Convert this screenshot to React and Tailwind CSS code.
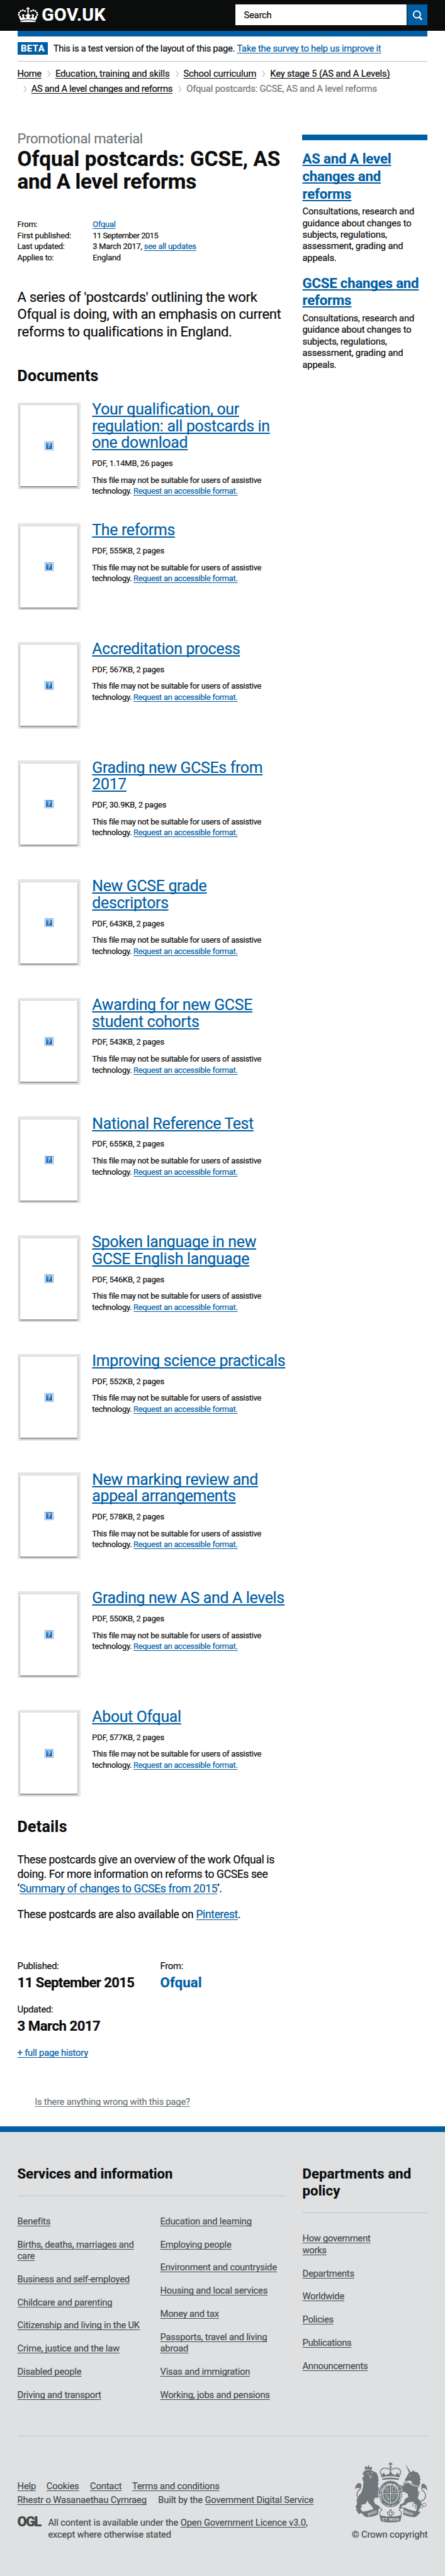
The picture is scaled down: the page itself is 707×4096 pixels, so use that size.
import React from "react";

const LINK = "text-[#005ea5] underline";

const DOCS = [
  { lines: ["Your qualification, our", "regulation: all postcards in", "one download"], meta: "PDF, 1.14MB, 26 pages" },
  { lines: ["The reforms"], meta: "PDF, 555KB, 2 pages" },
  { lines: ["Accreditation process"], meta: "PDF, 567KB, 2 pages" },
  { lines: ["Grading new GCSEs from", "2017"], meta: "PDF, 30.9KB, 2 pages" },
  { lines: ["New GCSE grade", "descriptors"], meta: "PDF, 643KB, 2 pages" },
  { lines: ["Awarding for new GCSE", "student cohorts"], meta: "PDF, 543KB, 2 pages" },
  { lines: ["National Reference Test"], meta: "PDF, 655KB, 2 pages" },
  { lines: ["Spoken language in new", "GCSE English language"], meta: "PDF, 546KB, 2 pages" },
  { lines: ["Improving science practicals"], meta: "PDF, 552KB, 2 pages" },
  { lines: ["New marking review and", "appeal arrangements"], meta: "PDF, 578KB, 2 pages" },
  { lines: ["Grading new AS and A levels"], meta: "PDF, 550KB, 2 pages" },
  { lines: ["About Ofqual"], meta: "PDF, 577KB, 2 pages" },
];

const SERVICES_A = [
  ["Benefits"],
  ["Births, deaths, marriages and", "care"],
  ["Business and self-employed"],
  ["Childcare and parenting"],
  ["Citizenship and living in the UK"],
  ["Crime, justice and the law"],
  ["Disabled people"],
  ["Driving and transport"],
];
const SERVICES_B = [
  ["Education and learning"],
  ["Employing people"],
  ["Environment and countryside"],
  ["Housing and local services"],
  ["Money and tax"],
  ["Passports, travel and living", "abroad"],
  ["Visas and immigration"],
  ["Working, jobs and pensions"],
];
const DEPARTMENTS = [
  ["How government", "works"],
  ["Departments"],
  ["Worldwide"],
  ["Policies"],
  ["Publications"],
  ["Announcements"],
];

function Lines({ lines }) {
  return lines.map((line, i) => (
    <React.Fragment key={line}>
      {i > 0 && <br />}
      {line}
    </React.Fragment>
  ));
}

function CrownLogo() {
  return (
    <svg className="h-[26px] w-[36px] shrink-0" viewBox="30 36 108 78" fill="#fff">
      <path d="M81 37h6v5h5v6h-5v6h-6v-6h-5v-6h5z" />
      <circle cx="84" cy="57" r="5" />
      <circle cx="84" cy="67" r="4" />
      {[[36, 77], [38, 66], [46, 57], [57, 53], [68, 57], [132, 77], [130, 66], [122, 57], [111, 53], [100, 57]].map(([x, y]) => (
        <circle key={x} cx={x} cy={y} r="5" />
      ))}
      <path d="M35 84l9-2 8 15 4-13-5-6 8-5 8 5-5 6 6 11 9-3-1-8-5 2V76l6 2 2-5 5-3 5 3 2 5 6-2v10l-5-2-1 8 9 3 6-11-5-6 8-5 8 5-5 6 4 13 8-15 9 2-9 22q-40-9-80 0z" />
      <path d="M45 109q39-9 78 0l-1 5H46z" />
    </svg>
  );
}

function Chevron() {
  return (
    <svg className="ml-[10px] mr-[8px] mt-[2px] h-[12px] w-[6px]" viewBox="0 0 6 12" fill="none" stroke="#bfc1c3" strokeWidth="1.4">
      <path d="M.8.6 5 6 .8 11.4" />
    </svg>
  );
}

function Header() {
  return (
    <header className="flex h-[53px] items-start bg-[#0b0c0c] px-[30px] text-white">
      <div className="mt-[12px] flex w-[376px] gap-[6px]">
        <CrownLogo />
        <span className="text-[31px] leading-[28px] font-bold tracking-[0.012em]">GOV.UK</span>
      </div>
      <div className="mt-[8px] flex h-[36px] w-[332px] gap-px">
        <div className="flex w-[296px] items-center bg-white pl-[15px] text-[16px] leading-[20px] text-[#0b0c0c]">Search</div>
        <div className="flex w-[35px] items-center justify-center bg-[#005ea5]">
          <svg className="h-[18px] w-[18px]" viewBox="0 0 18 18" fill="none" stroke="#fff" strokeWidth="2">
            <circle cx="8" cy="7.6" r="6" />
            <path d="m12 12.2 4.6 4.4" strokeWidth="2.6" />
          </svg>
        </div>
      </div>
    </header>
  );
}

function Thumbnail() {
  return (
    <div className="mt-[2px] h-[150px] w-[109px] shrink-0 bg-[#e6e6e6] p-[5px]">
      <div className="flex h-[140px] items-center justify-center bg-white shadow-[0_2px_2px_rgba(11,12,12,0.4),0_0_1px_rgba(11,12,12,0.5)]">
        <div className="flex h-[15px] w-[15px] items-center justify-center border border-[#7fa3cf] bg-white p-px">
          <span className="h-full w-full bg-linear-to-b from-[#3a94d0] to-[#1c67b4] text-center font-['Liberation_Serif',serif] text-[11px] leading-[11px] font-bold tracking-normal text-white [-webkit-text-stroke:0]">?</span>
        </div>
      </div>
    </div>
  );
}

function Document({ doc }) {
  return (
    <li className="mb-[53px] flex gap-[20px] first:mb-[44px] last:mb-0">
      <Thumbnail />
      <div className="w-[340px] text-[14px] leading-[19px]">
        <h3 className={`${LINK} text-[27px] leading-[29px] tracking-[-0.0125em] whitespace-nowrap`}><Lines lines={doc.lines} /></h3>
        <p className="mt-[11px] tracking-[-0.009em]">{doc.meta}</p>
        <p className="mt-[10px] tracking-[-0.0215em]">
          This file may not be suitable for users of assistive<br />
          technology. <a className={LINK}>Request an accessible format.</a>
        </p>
      </div>
    </li>
  );
}

function Related({ title }) {
  return (
    <div>
      <h2 className={`${LINK} text-[24px] leading-[30px] font-bold tracking-[-0.006em]`}><Lines lines={title} /></h2>
      <p className="mt-[5.5px] tracking-[-0.0114em]">
        Consultations, research and<br />guidance about changes to<br />subjects, regulations,<br />assessment, grading and<br />appeals.
      </p>
    </div>
  );
}

function FooterList({ items }) {
  return (
    <ul className="flex w-[226.5px] shrink-0 flex-col gap-[20px] whitespace-nowrap">
      {items.map((lines) => (
        <li key={lines[0]}><a className="underline"><Lines lines={lines} /></a></li>
      ))}
    </ul>
  );
}

function Crest() {
  const label = "font-['Roboto',sans-serif] font-bold tracking-normal";
  return (
    <svg className="h-[104px] w-[125px]" viewBox="15 13 375 312" fill="#6f777b">
      {/* crown */}
      <path d="M196 14h6v5h6v7h-6v8h-6v-8h-6v-7h6z" />
      <circle cx="199" cy="40" r="6" />
      <path d="M196 44h6v40h-6z" />
      <path d="M150 78C136 48 168 34 194 52M248 78C262 48 230 34 204 52" fill="none" stroke="#6f777b" strokeWidth="6" strokeDasharray="5 1.5" />
      <path d="M152 92q47-13 94 0l3-26-6 12-10-12-5 12-8 1-12-6-9-13-9 13-12 6-8-1-5-12-10 12-6-12z" />
      <path d="M155 98q44-11 88 0l-3 8q-41-9-82 0z" />
      {/* lion */}
      <path d="M67 51q-6-16 6-17l5 7 6-10 7 10 7-5q9 5 2 18-17-6-33-3zM82 29h5v7h-5z" />
      <path d="M65 57q18-7 37-1l12 6 15 7-3 5 8 5-2 6 6 7-4 6 5 10-6 5 4 12-4 10 6 16 10 11-4 9 9 5-4 16-8-4-10 10-13-2-7 17 7 16 23 12-1 12-8 10-4-7-7 6-3-8-8 4-8-15-19-20-2-13-13 20-21 4 2 13-8 9 10 8-1 10-14 8-7-5-3-10-6-3 2-12-6-7 9-17-3-20 13-24 12-13 8-26 3-29-6-17 2-10 8-1-3-9-7-5z" />
      <path d="M78 69l10 2M99 69l9-1M88 84q8 4 15 0M90 94h11" stroke="#dee0e2" strokeWidth="3" />
      <path d="M56 205q-31-5-31-24 1-15 14-26 10-10 5-23-4-12-14-3" fill="none" stroke="#6f777b" strokeWidth="5" />
      <path d="M15 154q0-23 16-32 14-3 18 10-2 12-13 16-12-7-21 6z" />
      {/* unicorn */}
      <path d="M274 20l28 43-7 4z" />
      <path d="M295 66l17-4 3-9 7 9 14 2 10 10-1 6 8 6-3 7 5 10-4 6 2 13-6 11-2 12-9-6-26-16-2-11-12-4-17 4-6-8 8-12z" />
      <path d="M294 118l46 22 1 20 4 20-5 20 14 14 7 18-9 16-8 16-4 9-12-1 6-14 3-20-20-19-20 1-12 5-8 10-18 3-6 16-10-3 6-19 18-8 7-20 17-11-3-15-17-10-13-1-9 13-10-4 5-11-13-8-1-14 8-9 16-2 13 7-1-10z" />
      <path d="M293 117q20 22 49 19" stroke="#dee0e2" strokeWidth="5" fill="none" strokeDasharray="6 2" />
      <path d="M296 85l8-3" stroke="#dee0e2" strokeWidth="3" />
      <path d="M350 218q30-9 31-31-1-16-14-25-10-11-5-23 4-10 13-4" fill="none" stroke="#6f777b" strokeWidth="4.5" />
      <path d="M389 164q1-28-14-37-13-6-17 6 1 12 12 16 13-3 19 15z" />
      <g fill="none" stroke="#6f777b" strokeWidth="3">
        <circle cx="278" cy="115" r="6" /><circle cx="270" cy="126" r="5" /><circle cx="342" cy="171" r="6" />
        <circle cx="322" cy="234" r="8" /><circle cx="335" cy="249" r="7" /><circle cx="359" cy="242" r="8" /><circle cx="374" cy="234" r="9" />
      </g>
      {/* garter and shield */}
      <ellipse cx="199" cy="178" rx="63" ry="70" stroke="#dee0e2" strokeWidth="3" />
      <ellipse cx="199" cy="177" rx="43" ry="50" fill="#dee0e2" />
      <ellipse cx="199" cy="177" rx="39" ry="46" />
      <path d="M199 131v92M160 176h78" stroke="#dee0e2" strokeWidth="3" />
      <path d="M170 148h22M170 156h22M172 164h20M206 186h22M206 195h20M206 204h14" stroke="#dee0e2" strokeWidth="2.5" strokeDasharray="7 2 4 2" />
      <path d="M208 143v26l8-8 10 8v-18l-8-5zM172 184q14 6 18 28M178 182q10 8 13 22M171 191q8 12 16 22" fill="none" stroke="#dee0e2" strokeWidth="2.2" />
      <path id="garter" d="M157 213A48 54 0 1 1 241 213" fill="none" />
      <text className={label} fontSize="17" fill="#dee0e2" textLength="225"><textPath href="#garter">HONI SOIT QUI MAL Y PENSE</textPath></text>
      <path d="M164 227q35 28 70 0" fill="none" stroke="#dee0e2" strokeWidth="2" />
      <circle cx="187" cy="238" r="3" fill="#dee0e2" /><circle cx="211" cy="238" r="3" fill="#dee0e2" />
      {/* scroll */}
      <path d="M44 270q40 0 86-22l7 18-3 18q-32 15-62 13-14-6-28-27zM355 270q-42 0-86-22l-7 18 3 18q32 15 62 13 14-6 28-27z" />
      <path d="M142 287q57 18 115 0l-7 32q-50 13-101 0z" />
      <path d="M130 250q23-2 25 12-14 4-11 25M268 250q-23-2-25 12 14 4 11 25" fill="none" stroke="#6f777b" strokeWidth="3.5" />
      <path d="M199 258l7 10-4 8q10-10 14 0 0 8-10 8h-3l3 10h-14l3-10h-3q-10 0-10-8 4-10 14 0l-4-8z" fill="none" stroke="#6f777b" strokeWidth="4" />
      <text className={label} fontSize="20" fill="#dee0e2" transform="translate(84 292) rotate(-21)" textLength="48">DIEU</text>
      <text className={label} fontSize="20" fill="#dee0e2" transform="translate(259 272) rotate(21)" textLength="58">DROIT</text>
      <text className={label} fontSize="20" fill="#dee0e2" x="156" y="317" textLength="86">ET MON</text>
    </svg>
  );
}

function Footer() {
  return (
    <footer className="mt-[31.5px] h-[778px] border-t-[10px] border-[#005ea5] bg-[#dee0e2] px-[30px] pt-[57.6px] text-[#454a4c]">
      <div className="flex gap-[30px]">
        <div className="w-[462px]">
          <h2 className="border-b border-[#bfc1c3] pb-[22.4px] text-[24px] leading-[30px] font-bold tracking-[-0.0045em] text-[#0b0c0c]">Services and information</h2>
          <div className="mt-[33.7px] flex gap-[20px] tracking-[-0.013em]">
            <FooterList items={SERVICES_A} />
            <FooterList items={SERVICES_B} />
          </div>
        </div>
        <div className="w-[216px]">
          <h2 className="border-b border-[#bfc1c3] pb-[22.4px] text-[24px] leading-[30px] font-bold tracking-[0.006em] text-[#0b0c0c]">Departments and<br />policy</h2>
          <div className="mt-[33.7px] tracking-[-0.018em]"><FooterList items={DEPARTMENTS} /></div>
        </div>
      </div>
      <div className="mt-[61px] flex justify-between border-t border-[#bfc1c3]">
        <div className="pt-[73.5px] leading-[24px] tracking-[-0.01em] whitespace-nowrap">
          <div className="flex gap-[18px]">
            <a className="underline">Help</a>
            <a className="underline">Cookies</a>
            <a className="ml-px underline">Contact</a>
            <a className="underline">Terms and conditions</a>
          </div>
          <div className="flex gap-[20px]">
            <a className="underline">Rhestr o Wasanaethau Cymraeg</a>
            <span>Built by the <a className="underline">Government Digital Service</a></span>
          </div>
          <div className="mt-[17.5px] flex leading-[20px]">
            <span className="w-[53px] text-[24px] leading-[17px] font-black tracking-[-0.085em]">OGL</span>
            <p>All content is available under the <a className="underline">Open Government Licence v3.0</a>,<br />except where otherwise stated</p>
          </div>
        </div>
        <div className="flex flex-col items-end pt-[44.5px]">
          <Crest />
          <p className="mt-[10.5px] tracking-[-0.0055em]">© Crown copyright</p>
        </div>
      </div>
    </footer>
  );
}

export default function App() {
  return (
    <div className="[zoom:0.9205] overflow-hidden bg-white font-['Roboto','Liberation_Sans',sans-serif] text-[16px] leading-[20px] tracking-[-0.015em] text-[#0b0c0c] [-webkit-text-stroke:0.22px] [text-decoration-skip-ink:none] [text-underline-offset:2px] [text-decoration-thickness:1px]">
      <Header />
      <div className="px-[30px]">
        <div className="h-[10px] bg-[#005ea5]" />
        <div className="flex items-center gap-[9px] border-b border-[#bfc1c3] py-[10px]">
          <span className="flex h-[22px] w-[53px] items-center justify-center bg-[#005ea5] font-bold tracking-[0.035em] text-white">BETA</span>
          <p className="tracking-[-0.0213em] whitespace-nowrap">This is a test version of the layout of this page. <a className={`${LINK} tracking-[-0.0156em]`}>Take the survey to help us improve it</a></p>
        </div>
        <nav className="flex flex-col gap-[6px] pt-[11px] tracking-[-0.0105em] whitespace-nowrap">
          <div className="flex items-center">
            <a className="tracking-[-0.024em] underline">Home</a>
            <Chevron /><a className="underline">Education, training and skills</a>
            <Chevron /><a className="underline">School curriculum</a>
            <Chevron /><a className="underline">Key stage 5 (AS and A Levels)</a>
          </div>
          <div className="flex items-center">
            <Chevron /><a className="tracking-[-0.0225em] underline">AS and A level changes and reforms</a>
            <Chevron /><span className="tracking-[-0.0125em] text-[#6f777b]">Ofqual postcards: GCSE, AS and A level reforms</span>
          </div>
        </nav>

        <div className="mt-[62px] flex gap-[30px]">
          <main className="w-[462px]">
            <p className="text-[24px] leading-[30px] tracking-[-0.0166em] text-[#6f777b]">Promotional material</p>
            <h1 className="text-[36px] leading-[39.5px] font-bold whitespace-nowrap">
              <span className="tracking-[0.0041em]">Ofqual postcards: GCSE, AS</span><br />
              <span className="tracking-[-0.0085em]">and A level reforms</span>
            </h1>
            <dl className="mt-[44.5px] grid grid-cols-[130px_1fr] text-[14px] leading-[19px]">
              <dt>From:</dt><dd><a className={LINK}>Ofqual</a></dd>
              <dt className="tracking-[-0.0092em]">First published:</dt><dd className="tracking-[-0.038em]">11 September 2015</dd>
              <dt>Last updated:</dt><dd>3 March 2017, <a className={LINK}>see all updates</a></dd>
              <dt>Applies to:</dt><dd>England</dd>
            </dl>
            <p className="mt-[44px] text-[24px] leading-[30px] tracking-[-0.0165em] whitespace-nowrap">
              A series of 'postcards' outlining the work<br />Ofqual is doing, with an emphasis on current<br />reforms to qualifications in England.
            </p>
            <h2 className="mt-[45.5px] text-[27px] leading-[30px] font-bold tracking-[0.008em]">Documents</h2>
            <ul className="mt-[29px]">
              {DOCS.map((doc) => <Document key={doc.lines[0]} doc={doc} />)}
            </ul>
            <h2 className="mt-[37.5px] text-[27px] leading-[30px] font-bold tracking-[0.011em]">Details</h2>
            <div className="mt-[29px] flex flex-col gap-[20px] text-[19px] leading-[25px] tracking-[-0.0195em] whitespace-nowrap">
              <p>These postcards give an overview of the work Ofqual is<br />doing. For more information on reforms to GCSEs see<br />‘<a className={LINK}>Summary of changes to GCSEs from 2015</a>’.</p>
              <p>These postcards are also available on <a className={LINK}>Pinterest</a>.</p>
            </div>
            <div className="mt-[66px] grid grid-cols-[246.5px_1fr] gap-y-[21px]">
              <div>
                <p>Published:</p>
                <p className="mt-[4px] text-[24px] leading-[30px] font-bold tracking-[-0.0267em]">11 September 2015</p>
              </div>
              <div>
                <p>From:</p>
                <p className="mt-[4px] text-[24px] leading-[30px] font-bold tracking-[0.007em] text-[#005ea5]">Ofqual</p>
              </div>
              <div>
                <p>Updated:</p>
                <p className="mt-[4px] text-[24px] leading-[30px] font-bold tracking-[-0.021em]">3 March 2017</p>
              </div>
            </div>
            <p className="mt-[21px]"><a className={LINK}>+ full page history</a></p>
            <p className="mt-[65px] pl-[30px] tracking-[-0.0139em] text-[#6f777b]"><a className="underline">Is there anything wrong with this page?</a></p>
          </main>
          <aside className="mt-[7px] flex w-[216px] flex-col whitespace-nowrap">
            <div className="mb-[18px] h-[10px] bg-[#005ea5]" />
            <div className="flex flex-col gap-[19px]">
              <Related title={["AS and A level", "changes and", "reforms"]} />
              <Related title={["GCSE changes and", "reforms"]} />
            </div>
          </aside>
        </div>
      </div>
      <Footer />
    </div>
  );
}
